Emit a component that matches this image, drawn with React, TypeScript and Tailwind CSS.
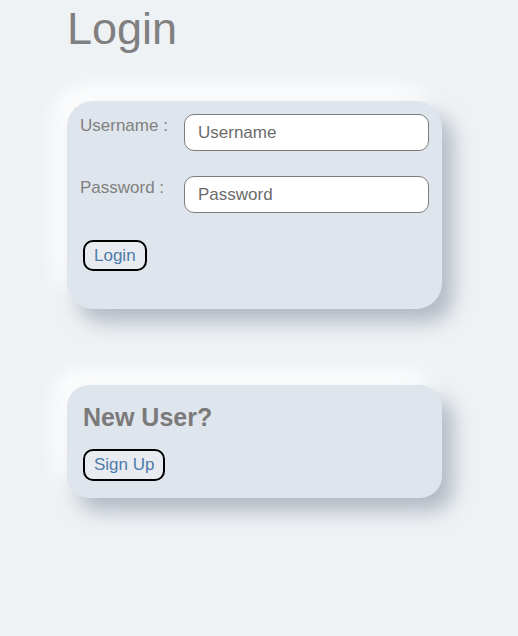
const cardShadow =
  "shadow-[11px_13px_20px_rgba(120,130,145,0.5),-12px_-14px_22px_rgba(255,255,255,0.95)]"

const Field = ({ label, placeholder, type }: { label: string; placeholder: string; type: string }) => (
  <div className="flex items-start">
    <label className="w-[104px] text-[17px] leading-[20px] pt-[2px] text-[#808080]">{label}</label>
    <input
      type={type}
      placeholder={placeholder}
      className="w-[245px] h-[37px] rounded-[10px] border border-[#7d7d7d] bg-white px-[13px] text-[17px] text-[#555] placeholder:text-[#6b6b6b] outline-none"
    />
  </div>
)

export default function App() {
  return (
    <div
      className="min-h-[636px] bg-[#eef2f5] pl-[67px] pt-[3px]"
      style={{ fontFamily: '"Liberation Sans", Arial, sans-serif' }}
    >
      <h1 className="text-[45px] leading-[52px] text-[#808080]">Login</h1>

      <div className={`mt-[46px] w-[375px] rounded-[26px] bg-[#dfe5ec] pl-[13px] pt-[13px] pb-[38px] ${cardShadow}`}>
        <form className="flex flex-col" onSubmit={(e) => e.preventDefault()}>
          <div className="flex flex-col gap-[25px]">
            <Field label="Username :" placeholder="Username" type="text" />
            <Field label="Password :" placeholder="Password" type="password" />
          </div>
          <button
            type="submit"
            className="ml-[3px] mt-[27px] w-fit h-[31px] rounded-[10px] border-2 border-black bg-[#e8ecf0] px-[9px] text-[17px] leading-[20px] text-[#4f7aab]"
          >
            Login
          </button>
        </form>
      </div>

      <div className={`mt-[76px] w-[375px] rounded-[22px] bg-[#dfe5ec] pl-[16px] pt-[18px] pb-[17px] ${cardShadow}`}>
        <h2 className="text-[25px] leading-[29px] font-bold text-[#7a7a7a]">New User?</h2>
        <button className="mt-[17px] h-[32px] rounded-[10px] border-2 border-black bg-[#e8ecf0] px-[9px] text-[17px] leading-[20px] text-[#4f7aab]">
          Sign Up
        </button>
      </div>
    </div>
  )
}
